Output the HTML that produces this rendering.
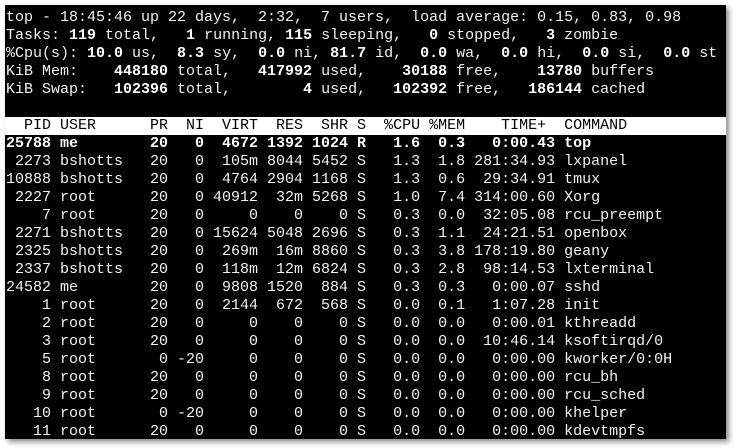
<!DOCTYPE html>
<html><head><meta charset="utf-8"><style>
html,body{margin:0;padding:0;background:#fff;width:736px;height:448px;overflow:hidden}
.term{position:absolute;left:5px;top:5px;width:721px;height:434px;background:#000;box-shadow:3px 3px 5px rgba(0,0,0,0.45);overflow:hidden}
pre{margin:0;position:absolute;left:1px;top:4px;font-family:"Liberation Mono",monospace;font-size:15px;line-height:18px;color:#f2f2f2;white-space:pre}
b{font-weight:bold;color:#fff}
.hd{display:block;background:#fff;color:#000;width:721px;margin-left:-1px;padding-left:1px}
</style></head><body><div class="term"><pre>top - 18:45:46 up 22 days,  2:32,  7 users,  load average: 0.15, 0.83, 0.98
Tasks:<b> 119 </b>total,<b>   1 </b>running,<b> 115 </b>sleeping,<b>   0 </b>stopped,<b>   3 </b>zombie
%Cpu(s):<b> 10.0 </b>us,<b>  8.3 </b>sy,<b>  0.0 </b>ni,<b> 81.7 </b>id,<b>  0.0 </b>wa,<b>  0.0 </b>hi,<b>  0.0 </b>si,<b>  0.0 </b>st
KiB Mem:  <b>  448180 </b>total,<b>   417992 </b>used,<b>    30188 </b>free,<b>    13780 </b>buffers
KiB Swap: <b>  102396 </b>total,<b>        4 </b>used,<b>   102392 </b>free,<b>   186144 </b>cached

<span class="hd">  PID USER      PR  NI  VIRT  RES  SHR S  %CPU %MEM    TIME+  COMMAND</span><b>25788 me        20   0  4672 1392 1024 R   1.6  0.3   0:00.43 top</b>
 2273 bshotts   20   0  105m 8044 5452 S   1.3  1.8 281:34.93 lxpanel
10888 bshotts   20   0  4764 2904 1168 S   1.3  0.6  29:34.91 tmux
 2227 root      20   0 40912  32m 5268 S   1.0  7.4 314:00.60 Xorg
    7 root      20   0     0    0    0 S   0.3  0.0  32:05.08 rcu_preempt
 2271 bshotts   20   0 15624 5048 2696 S   0.3  1.1  24:21.51 openbox
 2325 bshotts   20   0  269m  16m 8860 S   0.3  3.8 178:19.80 geany
 2337 bshotts   20   0  118m  12m 6824 S   0.3  2.8  98:14.53 lxterminal
24582 me        20   0  9808 1520  884 S   0.3  0.3   0:00.07 sshd
    1 root      20   0  2144  672  568 S   0.0  0.1   1:07.28 init
    2 root      20   0     0    0    0 S   0.0  0.0   0:00.01 kthreadd
    3 root      20   0     0    0    0 S   0.0  0.0  10:46.14 ksoftirqd/0
    5 root       0 -20     0    0    0 S   0.0  0.0   0:00.00 kworker/0:0H
    8 root      20   0     0    0    0 S   0.0  0.0   0:00.00 rcu_bh
    9 root      20   0     0    0    0 S   0.0  0.0   0:00.00 rcu_sched
   10 root       0 -20     0    0    0 S   0.0  0.0   0:00.00 khelper
   11 root      20   0     0    0    0 S   0.0  0.0   0:00.00 kdevtmpfs</pre></div></body></html>
